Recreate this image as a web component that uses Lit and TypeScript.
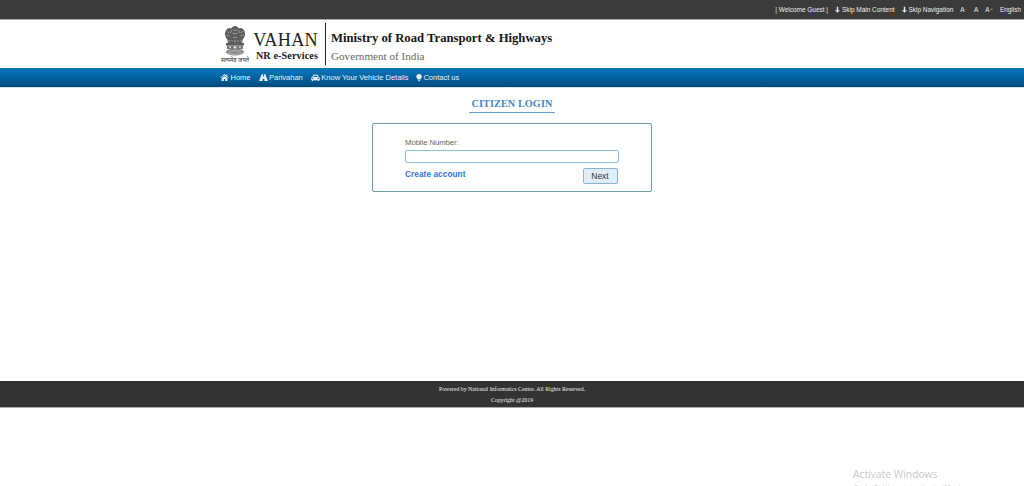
import { LitElement, html, css } from "lit";
import { customElement } from "lit/decorators.js";

@customElement("app-root")
export class AppRoot extends LitElement {
  static styles = css`
    :host { display: block; position: relative; width: 100%; height: 486px; overflow: hidden; background: #fff; font-family: "Liberation Sans", Arial, sans-serif; }
    .top { height: 19px; background: #3b3b3b; border-bottom: 1px solid #aaa; display: flex; justify-content: flex-end; align-items: center; padding-right: 3px; gap: 7px; color: #eee; font-size: 6.45px; }
    .top span { display: inline-flex; align-items: center; gap: 1px; white-space: nowrap; }
    .top svg { width: 7px; height: 7px; fill: #eee; }
    .top small { font-size: 4px; margin-bottom: 2px; }
    .top .w { margin-right: -1px; }
    .top .s { margin-right: -1px; }
    .head { height: 48px; display: flex; padding-left: 220px; box-sizing: border-box; }
    .emblem { width: 30px; display: flex; flex-direction: column; align-items: center; padding-top: 6px; }
    .emblem svg { width: 24px; height: 30px; display: block; }
    .motto { font: 5.800px/6px "Noto Sans", "Liberation Sans", sans-serif; color: #333; white-space: nowrap; margin-top: 1px; }
    .brand { width: 65px; margin-left: 3px; padding-top: 10px; text-align: right; font-family: "Liberation Serif", serif; color: #222; }
    .brand .v { font-size: 18.200px; line-height: 20px; letter-spacing: 0.3px; white-space: nowrap; }
    .brand .n { font-size: 10.200px; line-height: 11px; font-weight: bold; margin-top: 0; white-space: nowrap; letter-spacing: 0.1px; }
    .rule { width: 1px; height: 42px; background: #222; margin: 3px 5px 0 7px; }
    .minis { font-family: "Liberation Serif", serif; padding-top: 10px; white-space: nowrap; }
    .minis .m { font-size: 12.700px; font-weight: bold; color: #151515; line-height: 16px; }
    .minis .g { font-size: 11.150px; color: #666; line-height: 14px; margin-top: 3px; }
    .nav { height: 20px; background: linear-gradient(#0a76b8 0%, #0366a6 45%, #03487c 100%); display: flex; align-items: center; padding-left: 220px; gap: 8px; color: #e9f2f8; font-size: 7.5px; border-bottom: 1px solid #d8e6f0; box-sizing: border-box; }
    .nav span { display: inline-flex; align-items: center; gap: 1.500px; white-space: nowrap; }
    .nav svg { width: 9px; height: 9px; fill: #e9f2f8; }
    .nav .c { gap: 0; margin-left: -1px; }
    .nav .c svg { width: 8px; }
    .main { height: 293px; display: flex; flex-direction: column; align-items: center; padding-top: 10px; box-sizing: border-box; }
    h1 { margin: 0; font: bold 10.200px/12px "Liberation Serif", serif; color: #3f87bf; letter-spacing: 0.1px; border-bottom: 1px solid #5f9fca; width: 86px; height: 14px; text-align: center; box-sizing: content-box; white-space: nowrap; }
    .card { margin-top: 10px; width: 280px; height: 69px; box-sizing: border-box; border: 1px solid #6f9cb0; border-radius: 2px; padding: 14px 33px 0 32px; }
    label { display: block; font-size: 7.8px; letter-spacing: -0.1px; line-height: 10px; color: #6b6455; }
    input { display: block; width: 214px; height: 13px; box-sizing: border-box; border: 1px solid #86bedb; border-radius: 2px; margin: 2px 0 0; padding: 0; background: #fff; outline: none; }
    .row { display: flex; justify-content: space-between; align-items: flex-start; margin-top: 5px; }
    .row a { font-size: 8.2px; font-weight: bold; color: #2b76e5; letter-spacing: 0.1px; line-height: 12px; text-decoration: none; margin-top: 1px; }
    button { width: 35px; height: 16px; margin: 0 0.5px 0 0; padding: 0; background: #e0edf8; border: 1px solid #8ab6d0; border-radius: 2px; font: 8.5px "Liberation Sans", sans-serif; color: #333; }
    .foot { height: 26px; background: #333; border-bottom: 1px solid #aaa; text-align: center; color: #f0f0f0; font: 5.850px/6px "Liberation Serif", serif; display: flex; flex-direction: column; justify-content: center; gap: 5px; }
    .win { position: absolute; left: 853px; top: 468px; color: #c8c8c8; font: 10.300px/13px "Open Sans", sans-serif; white-space: nowrap; }
    .win div:last-child { font-size: 7.500px; line-height: 10px; margin-top: 1px; }
  `;

  render() {
    const arrow = html`<svg viewBox="0 0 10 10"><path d="M4 1h2v5h2.500L5 9.500 1.500 6H4z"/></svg>`;
    return html`
      <div class="top">
        <span class="w">| Welcome Guest |</span>
        <span class="s">${arrow}Skip Main Content</span>
        <span>${arrow}Skip Navigation</span>
        <span>A<small>-</small></span><span>A</span><span>A<small>+</small></span>
        <span>English</span>
      </div>
      <div class="head">
        <div class="emblem">
          <svg viewBox="0 0 24 30">
            <g fill="#5c5c5c">
              <ellipse cx="6.500" cy="8" rx="4.500" ry="6"/><ellipse cx="17.500" cy="8" rx="4.500" ry="6"/><ellipse cx="12" cy="6.500" rx="5" ry="6.500"/>
              <path d="M4 12h16l-1 5H5z"/>
              <rect x="3" y="17" width="18" height="2.500"/>
              <rect x="4" y="19.500" width="16" height="3.500" fill="#777"/>
              <ellipse cx="12" cy="26" rx="9" ry="3.500" fill="#8a8a8a"/>
            </g>
            <g stroke="#c9c9c9" stroke-width="0.6" fill="none">
              <path d="M4 5l2 2M9 4l-2 3M3.500 9l3 1M15 4l2 3M20 5l-2 2M20.500 9l-3 1M10 3l2 2 2-2M9.500 7l2.500 1 2.500-1M10 11l2 1 2-1M6 14v2M9 14v2M12 14v2.500M15 14v2M18 14v2"/>
              <path d="M6 26q6-3 12 0M5 27.500q7 2 14 0"/>
            </g>
            <g fill="#e2e2e2"><circle cx="12" cy="21.200" r="1.300"/><circle cx="7" cy="21.200" r="0.900"/><circle cx="17" cy="21.200" r="0.900"/></g>
          </svg>
          <div class="motto">सत्यमेव जयते</div>
        </div>
        <div class="brand"><div class="v">VAHAN</div><div class="n">NR e-Services</div></div>
        <div class="rule"></div>
        <div class="minis"><div class="m">Ministry of Road Transport &amp; Highways</div><div class="g">Government of India</div></div>
      </div>
      <div class="nav">
        <span><svg viewBox="0 0 10 10"><path d="M5 1.200.4 5.200l.6.600L5 2.400l4 3.400.6-.6-1.600-1.400V1.600H6.900v1.200zM1.800 6v3h2.400V6.800h1.600V9h2.400V6L5 3.400z"/></svg>Home</span>
        <span><svg viewBox="0 0 10 10"><path d="M3 1.500h1.500L4.300 4h1.400L5.500 1.500H7L10 9H6L5.800 6.500H4.200L4 9H0z"/></svg>Parivahan</span>
        <span><svg viewBox="0 0 10 10"><path d="M2.500 2h5l1 2.500c.8.200 1.300.7 1.300 1.500v2H8.700v1H7.500V8h-5v1H1.300V8H.2V6c0-.8.500-1.300 1.300-1.500zm.6 1-.7 1.500h5.200L6.900 3zM2 5.400a.8.800 0 100 1.600.8.800 0 000-1.600zm6 0a.8.800 0 100 1.600.8.800 0 000-1.600z"/></svg>Know Your Vehicle Details</span>
        <span class="c"><svg viewBox="0 0 10 10"><path d="M5 .5a3.400 3.400 0 00-2 6.200V7.500h4v-.8A3.400 3.400 0 005 .5zM3.500 8h3v.6h-3zM4 9h2v.6H4z"/></svg>Contact us</span>
      </div>
      <div class="main">
        <h1>CITIZEN LOGIN</h1>
        <div class="card">
          <label>Mobile Number:</label>
          <input type="text" />
          <div class="row"><a>Create account</a><button>Next</button></div>
        </div>
      </div>
      <div class="foot"><div>Powered by National Informatics Centre. All Rights Reserved.</div><div>Copyright @2019</div></div>
      <div class="win"><div>Activate Windows</div><div>Go to Settings to activate Windows.</div></div>
    `;
  }
}
